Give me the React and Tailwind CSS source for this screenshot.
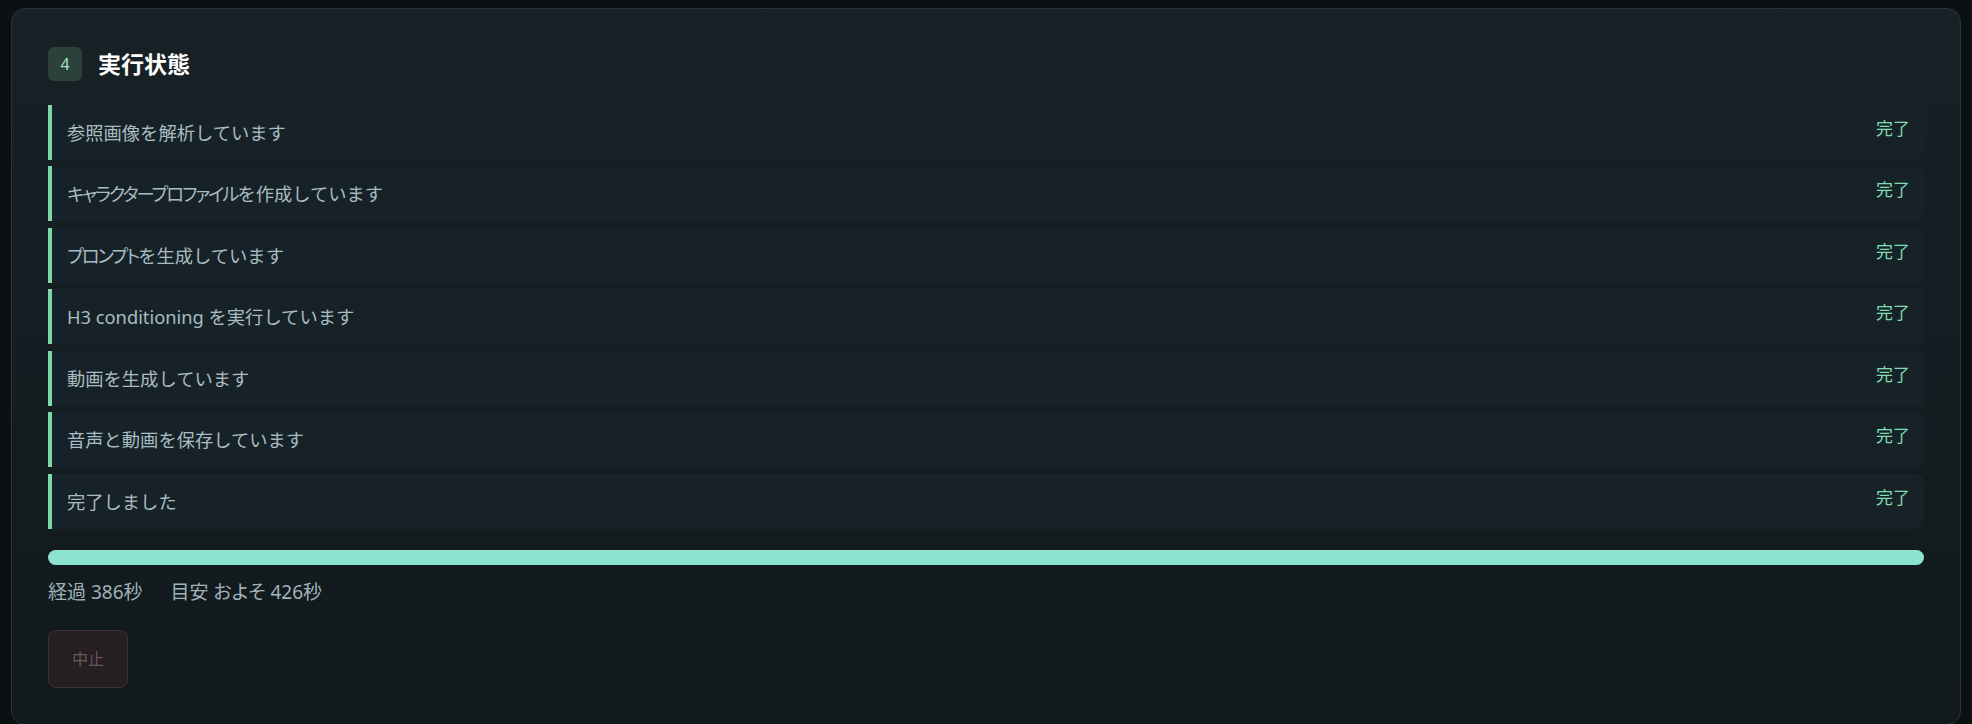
import React from 'react';

const steps = [
  '参照画像を解析しています',
  'キャラクタープロファイルを作成しています',
  'プロンプトを生成しています',
  'H3 conditioning を実行しています',
  '動画を生成しています',
  '音声と動画を保存しています',
  '完了しました',
];

// katakana runs are set proportionally, as in the screenshot's UI font
function Label({ text }) {
  const parts = text.split(/([\u30A0-\u30FF]+)/);
  return (
    <span className="text-[18.3px] leading-[30px] text-[#a9bcc2]">
      {parts.map((p, i) =>
        /^[\u30A0-\u30FF]+$/.test(p) ? (
          <span key={i} className="tracking-[-2px] [font-feature-settings:'palt']">{p}</span>
        ) : (
          <span key={i}>{p}</span>
        )
      )}
    </span>
  );
}

export default function App() {
  return (
    <div
      className="min-h-screen bg-[#0b1013] pt-2 px-[11px]"
      style={{ fontFamily: '"Noto Sans", "Noto Sans CJK JP", sans-serif' }}
    >
      <div className="rounded-[14px] border border-[#25363b] bg-gradient-to-b from-[#172126] to-[#11191c] pt-[38px] px-9 pb-9">
        {/* Header */}
        <div className="flex items-center gap-4">
          <div className="w-[34px] h-[34px] rounded-md bg-[#2b4139] flex items-center justify-center text-[#9fe0c0] text-[16px]">
            4
          </div>
          <h2 className="text-[23px] font-bold text-white">実行状態</h2>
        </div>

        {/* Steps */}
        <div className="mt-[23px] flex flex-col gap-[6.5px]">
          {steps.map((s) => (
            <div
              key={s}
              className="h-[55px] flex items-start justify-between border-l-4 border-[#7fd6a8] bg-[#172228] rounded-r-lg pl-[15px] pr-[14px] pt-[13px]"
            >
              <Label text={s} />
              <span className="text-[17px] leading-[22px] text-[#7fdcb4]">完了</span>
            </div>
          ))}
        </div>

        {/* Progress */}
        <div className="mt-[21px] h-[15px] rounded-full bg-[#8de3d1]" />

        <div className="mt-[13px] flex gap-[28px] text-[19px] leading-[28px] text-[#9fb2b9]">
          <span>経過 386秒</span>
          <span>
            目安 <span className="[font-feature-settings:'palt']">およそ</span> 426秒
          </span>
        </div>

        <button className="mt-[24px] w-[80px] h-[58px] rounded-lg border border-[#3d3233] bg-[#251f21] text-[#6b5557] text-[16px]">
          中止
        </button>
      </div>
    </div>
  );
}
